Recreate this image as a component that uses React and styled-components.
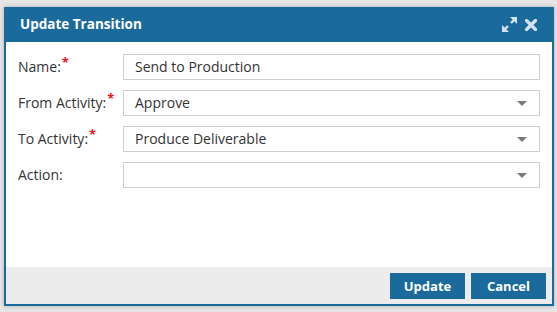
import React from "react";
import styled, { createGlobalStyle } from "styled-components";

const Global = createGlobalStyle`
  html, body { margin: 0; padding: 0; }
  body {
    background: #e6e6e6;
    font-family: "Open Sans", "Liberation Sans", sans-serif;
    width: 557px;
    height: 312px;
    overflow: hidden;
  }
`;

const BLUE = "#1b6a9c";

const Dialog = styled.div`
  box-sizing: border-box;
  margin: 7px 0 0 4px;
  width: 550px;
  height: 299px;
  border: 2px solid ${BLUE};
  background: #fff;
  display: flex;
  flex-direction: column;
  box-shadow: 0 0 4px rgba(0, 0, 0, 0.25);
`;

const Header = styled.div`
  height: 35px;
  flex: none;
  background: ${BLUE};
  display: flex;
  align-items: center;
  margin: -2px -2px 0 -2px;
  padding: 0 17px 1px 16px;
  box-sizing: border-box;
`;

const Title = styled.div`
  flex: 1;
  color: #fff;
  font-weight: 700;
  font-size: 13.5px;
  line-height: 20px;
`;

const IconBox = styled.div`
  display: flex;
  align-items: center;
  gap: 8px;
`;

const IconBtn = styled.span`
  display: inline-flex;
  width: ${(p) => p.$w}px;
  height: ${(p) => p.$h}px;
  margin-top: ${(p) => p.$mt || 0}px;
  color: #d3e4f0;
`;

const Body = styled.div`
  flex: 1;
  padding: 12px 12px 0 12px;
  display: flex;
  flex-direction: column;
  gap: 10px;
`;

const Row = styled.div`
  display: flex;
  align-items: center;
  height: 26px;
`;

const Label = styled.div`
  width: 105px;
  flex: none;
  font-size: 14px;
  color: #333;
  white-space: nowrap;
  padding-bottom: 1px;
`;

const Req = styled.sup`
  color: #e8141c;
  font-size: 13px;
  font-weight: 700;
  vertical-align: top;
  position: relative;
  top: -4px;
  margin-left: 1px;
`;

const Field = styled.div`
  box-sizing: border-box;
  flex: 1;
  height: 26px;
  border: 1px solid #cfcfcf;
  display: flex;
  align-items: center;
  padding: 0 12px 1px 11px;
  font-size: 14px;
  color: #333;
`;

const FieldText = styled.span`
  flex: 1;
`;

const Caret = styled.span`
  width: 0;
  height: 0;
  margin-top: 1px;
  border-left: 5px solid transparent;
  border-right: 5px solid transparent;
  border-top: 5px solid #7a7a7a;
`;

const Footer = styled.div`
  height: 37px;
  flex: none;
  background: #ececec;
  display: flex;
  justify-content: flex-end;
  align-items: flex-start;
  gap: 6px;
  padding: 6px 6px 0 0;
  box-sizing: border-box;
`;

const Button = styled.button`
  width: 75px;
  height: 26px;
  border: none;
  background: ${BLUE};
  color: #fff;
  font-family: "Open Sans", "Liberation Sans", sans-serif;
  font-weight: 700;
  font-size: 13px;
  padding: 0 0 1px 0;
  cursor: pointer;
`;

const rows = [
  { label: "Name:", req: true, value: "Send to Production", select: false },
  { label: "From Activity:", req: true, value: "Approve", select: true },
  { label: "To Activity:", req: true, value: "Produce Deliverable", select: true },
  { label: "Action:", req: false, value: "", select: true },
];

export default function App() {
  return (
    <>
      <Global />
      <Dialog>
        <Header>
          <Title>Update Transition</Title>
          <IconBox>
            <IconBtn $w={15} $h={15}>
              <svg width="15" height="15" viewBox="0 0 15 15">
                <polygon points="8,0 15,0 15,7" fill="currentColor" />
                <line x1="13" y1="2" x2="9" y2="6" stroke="currentColor" strokeWidth="2.4" />
                <polygon points="0,8 0,15 7,15" fill="currentColor" />
                <line x1="2" y1="13" x2="6" y2="9" stroke="currentColor" strokeWidth="2.4" />
              </svg>
            </IconBtn>
            <IconBtn $w={12} $h={12} $mt={2}>
              <svg width="12" height="12" viewBox="0 0 12 12">
                <path d="M1.5 1.5 L10.5 10.5 M10.5 1.5 L1.5 10.5" stroke="currentColor" strokeWidth="3.2" strokeLinecap="round" />
              </svg>
            </IconBtn>
          </IconBox>
        </Header>
        <Body>
          {rows.map((r) => (
            <Row key={r.label}>
              <Label>
                {r.label}
                {r.req && <Req>*</Req>}
              </Label>
              <Field>
                <FieldText>{r.value}</FieldText>
                {r.select && <Caret />}
              </Field>
            </Row>
          ))}
        </Body>
        <Footer>
          <Button>Update</Button>
          <Button>Cancel</Button>
        </Footer>
      </Dialog>
    </>
  );
}
